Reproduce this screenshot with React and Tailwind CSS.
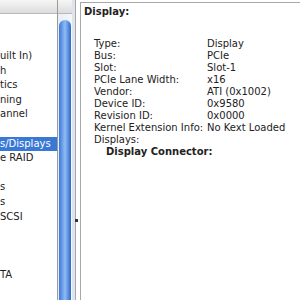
import React from 'react';

const leftRows = [
  { t: 'uilt In)' },
  { t: 'h' },
  { t: 'tics' },
  { t: 'ning' },
  { t: 'annel' },
  { t: '' },
  { t: 's/Displays', sel: true },
  { t: 'e RAID' },
  { t: '' },
  { t: 's' },
  { t: 's' },
  { t: 'SCSI' },
  { t: '' },
  { t: '' },
  { t: '' },
  { t: 'TA' },
];

const props = [
  ['Type:', 'Display'],
  ['Bus:', 'PCIe'],
  ['Slot:', 'Slot-1'],
  ['PCIe Lane Width:', 'x16'],
  ['Vendor:', 'ATI (0x1002)'],
  ['Device ID:', '0x9580'],
  ['Revision ID:', '0x0000'],
  ['Kernel Extension Info:', 'No Kext Loaded'],
  ['Displays:', ''],
];

export default function App() {
  return (
    <div className="flex h-[300px] w-[300px] overflow-hidden bg-white text-[#222]" style={{ fontFamily: '"DejaVu Sans", sans-serif' }}>
      {/* left list */}
      <div className="flex w-[57px] shrink-0 flex-col">
        <div className="h-[14px] border-b border-[#b8b8b8] bg-gradient-to-b from-[#f6f6f6] to-[#dcdcdc]" />
        <div className="flex flex-col pt-[35px] text-[10px] leading-[14.6px]">
          {leftRows.map((r, i) => (
            <div
              key={i}
              className={`h-[14.6px] overflow-hidden whitespace-nowrap ${r.sel ? 'bg-[#3a78d6] text-white' : ''}`}
            >
              {r.t}
            </div>
          ))}
        </div>
      </div>
      {/* scrollbar */}
      <div className="flex w-[15px] shrink-0 flex-col border-l border-[#9a9a9a] bg-gradient-to-r from-[#e8eefa] to-[#f4f7fd]">
        <div className="h-[14px] border-b border-[#b8b8b8] bg-gradient-to-b from-[#f6f6f6] to-[#dcdcdc]" />
        <div className="mx-auto mt-[6px] w-[12px] flex-1 rounded-t-full bg-gradient-to-r from-[#3f78d8] via-[#8fbcf3] to-[#2e67c9]" />
      </div>
      {/* splitter */}
      <div className="relative flex w-[8px] shrink-0">
        <div className="w-[3px] bg-[#dfe4ec]" />
        <div className="w-[1px] bg-[#a8a8a8]" />
        <div className="w-[4px] bg-white" />
        <div className="absolute left-[3px] top-[219px] h-[3px] w-[3px] bg-[#333]" />
      </div>
      {/* right panel */}
      <div className="mt-[2px] flex-1 border-l border-t border-[#a8a8a8] pl-[3px] text-[10px] leading-[12px]">
        <div className="pt-[3px] font-bold">Display:</div>
        <div className="mt-[20px] pl-[10px]">
          {props.map(([k, v]) => (
            <div key={k} className="flex h-[12px] whitespace-nowrap">
              <span className="w-[113px] shrink-0">{k}</span>
              <span>{v}</span>
            </div>
          ))}
          <div className="pl-[12px] font-bold">Display Connector:</div>
        </div>
      </div>
    </div>
  );
}
